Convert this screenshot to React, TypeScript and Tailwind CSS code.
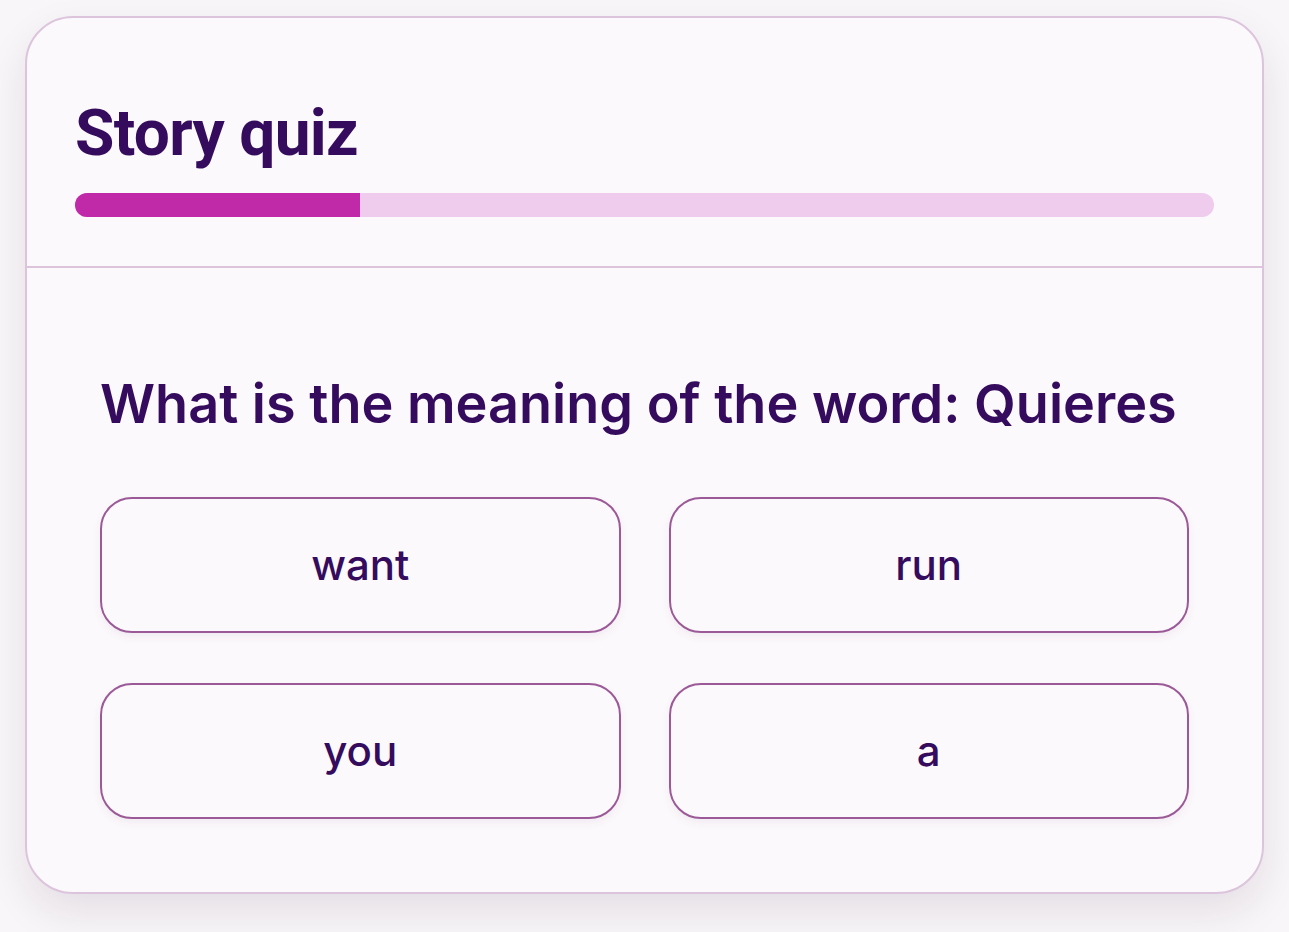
import React from "react";

const options = ["want", "run", "you", "a"];

export default function App() {
  const progress = 25;

  return (
    <div className="min-h-screen bg-[#f8f6f8] px-[25px] pt-[16px] pb-10">
      <div className="rounded-[48px] border-2 border-[#dcc5dc] bg-[#fcf9fc] shadow-[0_18px_40px_rgba(60,20,60,0.10)]">
        {/* header */}
        <div className="border-b-2 border-[#dcc5dc] px-[48px] pt-[78px] pb-[49px]">
          <h1 className="font-['Roboto',sans-serif] text-[64px] leading-[1.2] font-bold tracking-[-0.7px] text-[#350b5e]">
            Story quiz
          </h1>
          <div className="mt-[20px] h-[24px] w-full overflow-hidden rounded-full bg-[#efcbed]">
            <div className="h-full bg-[#c02aa8]" style={{ width: `${progress}%` }} />
          </div>
        </div>

        {/* body */}
        <div className="px-[73px] pt-[104px] pb-[73px] font-['Inter',sans-serif]">
          <h2 className="text-[54px] leading-[1.2] font-semibold whitespace-nowrap text-[#350b5e]">
            What is the meaning of the word: Quieres
          </h2>
          <div className="mt-[60px] grid grid-cols-2 gap-x-[48px] gap-y-[50px]">
            {options.map((o) => (
              <button
                key={o}
                className="flex h-[136px] items-center justify-center rounded-[32px] border-[2.5px] border-[#9b5a97] bg-[#fcf9fc] text-[42px] font-medium text-[#350b5e] shadow-[0_4px_10px_rgba(60,20,60,0.06)]"
              >
                {o}
              </button>
            ))}
          </div>
        </div>
      </div>
    </div>
  );
}
